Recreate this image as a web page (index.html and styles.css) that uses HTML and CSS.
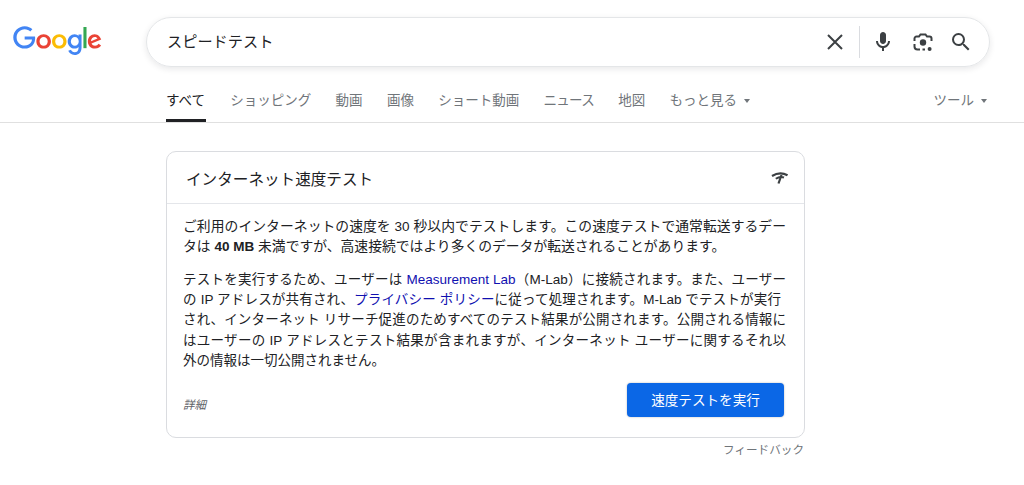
FILE: index.html
```html
<!DOCTYPE html>
<html lang="ja">
<head>
<meta charset="utf-8">
<title>スピードテスト</title>
<link rel="stylesheet" href="styles.css">
</head>
<body>
<header class="top">
  <svg class="logo" viewBox="0 0 272 92" role="img" aria-label="Google">
    <path fill="#EA4335" d="M115.75 47.18c0 12.77-9.99 22.18-22.25 22.18s-22.25-9.41-22.25-22.18C71.25 34.32 81.24 25 93.5 25s22.25 9.32 22.25 22.18zm-9.74 0c0-7.98-5.79-13.44-12.51-13.44S80.99 39.2 80.99 47.18c0 7.9 5.79 13.44 12.51 13.44s12.51-5.55 12.51-13.44z"/>
    <path fill="#FBBC05" d="M163.75 47.18c0 12.77-9.99 22.18-22.25 22.18s-22.25-9.41-22.25-22.18c0-12.85 9.99-22.18 22.25-22.18s22.25 9.32 22.25 22.18zm-9.74 0c0-7.98-5.79-13.44-12.51-13.44s-12.51 5.46-12.51 13.44c0 7.9 5.79 13.44 12.51 13.44s12.51-5.55 12.51-13.44z"/>
    <path fill="#4285F4" d="M209.75 26.34v39.82c0 16.38-9.66 23.07-21.08 23.07-10.75 0-17.22-7.19-19.66-13.07l8.48-3.53c1.51 3.61 5.21 7.87 11.17 7.87 7.31 0 11.84-4.51 11.84-13v-3.19h-.34c-2.18 2.69-6.38 5.04-11.68 5.04-11.09 0-21.25-9.66-21.25-22.09 0-12.52 10.16-22.26 21.25-22.26 5.29 0 9.49 2.35 11.68 4.96h.34v-3.61h9.25zm-8.56 20.92c0-7.81-5.21-13.52-11.84-13.52-6.72 0-12.35 5.71-12.35 13.52 0 7.73 5.63 13.36 12.35 13.36 6.63 0 11.84-5.63 11.84-13.36z"/>
    <path fill="#34A853" d="M225 3v65h-9.5V3h9.5z"/>
    <path fill="#EA4335" d="M262.02 54.48l7.56 5.04c-2.44 3.61-8.32 9.83-18.48 9.83-12.6 0-22.01-9.74-22.01-22.18 0-13.19 9.49-22.18 20.92-22.18 11.51 0 17.14 9.16 18.98 14.11l1.01 2.52-29.65 12.28c2.27 4.45 5.8 6.72 10.75 6.72 4.96 0 8.4-2.44 10.92-6.14zm-23.27-7.98l19.82-8.23c-1.09-2.77-4.37-4.7-8.23-4.7-4.95 0-11.84 4.37-11.59 12.93z"/>
    <path fill="#4285F4" d="M35.29 41.41V32H67c.31 1.64.47 3.58.47 5.68 0 7.06-1.93 15.79-8.15 22.01-6.05 6.3-13.78 9.66-24.02 9.66C16.32 69.35.36 53.89.36 34.91.36 15.93 16.32.47 35.3.47c10.5 0 17.98 4.12 23.6 9.49l-6.64 6.64c-4.03-3.78-9.49-6.72-16.97-6.72-13.86 0-24.7 11.17-24.7 25.03 0 13.86 10.84 25.03 24.7 25.03 8.99 0 14.11-3.61 17.39-6.89 2.66-2.66 4.41-6.46 5.1-11.65l-22.49.01z"/>
  </svg>
  <div class="search">
    <span class="query">スピードテスト</span>
    <svg class="ico-x" viewBox="0 0 24 24"><path d="M5 5l14 14M19 5L5 19" fill="none" stroke="#3c4043" stroke-width="2"/></svg>
    <span class="divider"></span>
    <svg class="ico-mic" viewBox="0 0 24 24"><path fill="#3c4043" d="M12 14c1.66 0 3-1.34 3-3V5c0-1.66-1.34-3-3-3S9 3.34 9 5v6c0 1.66 1.34 3 3 3z"/><path fill="#3c4043" d="M17 11c0 2.76-2.24 5-5 5s-5-2.24-5-5H5c0 3.53 2.61 6.43 6 6.92V21h2v-3.08c3.39-.49 6-3.39 6-6.92h-2z"/></svg>
    <svg class="ico-lens" viewBox="0 0 24 24"><circle cx="12" cy="12.5" r="3.2" fill="#3c4043"/><circle cx="18.6" cy="19" r="2" fill="#3c4043"/><path d="M3.5 11V8.5a2 2 0 0 1 2-2H8L9.5 4.5h5L16 6.5h2.5a2 2 0 0 1 2 2V11M3.5 14v2.5a3 3 0 0 0 3 3H9M11.5 19.5H14" fill="none" stroke="#3c4043" stroke-width="2"/></svg>
    <svg class="ico-search" viewBox="0 0 24 24"><path fill="#3c4043" d="M15.5 14h-.79l-.28-.27A6.47 6.47 0 0 0 16 9.5 6.5 6.5 0 1 0 9.5 16c1.61 0 3.09-.59 4.23-1.57l.27.28v.79l5 4.99L20.49 19l-4.99-5zm-6 0C7.01 14 5 11.99 5 9.5S7.01 5 9.5 5 14 7.01 14 9.500 11.99 14 9.500 14z"/></svg>
  </div>
</header>
<nav class="tabs">
  <a class="tab active">すべて</a>
  <a class="tab">ショッピング</a>
  <a class="tab">動画</a>
  <a class="tab">画像</a>
  <a class="tab">ショート動画</a>
  <a class="tab tight">ニュース</a>
  <a class="tab">地図</a>
  <a class="tab">もっと見る<i class="caret"></i></a>
  <a class="tab tools">ツール<i class="caret"></i></a>
</nav>
<main class="content">
  <section class="card">
    <div class="card-head">
      <h2 class="card-title">インターネット速度テスト</h2>
      <svg class="ico-speed" viewBox="0 0 17 12"><path d="M1 4Q9-.8 16.500 3.300" fill="none" stroke="#3c4043" stroke-width="2.200"/><path d="M4.800 6.800Q9 3.800 13 5.500" fill="none" stroke="#3c4043" stroke-width="2"/><path d="M10.500 3L7.500 11.500" fill="none" stroke="#3c4043" stroke-width="2.200"/></svg>
    </div>
    <div class="card-body">
      <p class="para para-lead">
        <span class="line full">ご利用のインターネットの速度を <span class="latin">30</span> 秒以内でテストします。この速度テストで通常転送するデー</span>
        <span class="line">タは <b class="latin">40 MB</b> 未満ですが、高速接続ではより多くのデータが転送されることがあります。</span>
      </p>
      <p class="para para-main">
        <span class="line full">テストを実行するため、ユーザーは <a class="link latin">Measurement Lab</a>（<span class="latin">M-Lab</span>）に接続されます。また、ユーザー</span>
        <span class="line full short">の <span class="latin">IP</span> アドレスが共有され、<a class="link">プライバシー ポリシー</a>に従って処理されます。<span class="latin">M-Lab</span> でテストが実行</span>
        <span class="line full">され、インターネット リサーチ促進のためすべてのテスト結果が公開されます。公開される情報に</span>
        <span class="line full">はユーザーの <span class="latin">IP</span> アドレスとテスト結果が含まれますが、インターネット ユーザーに関するそれ以</span>
        <span class="line">外の情報は一切公開されません。</span>
      </p>
      <div class="card-foot">
        <em class="more">詳細</em>
        <button class="run">速度テストを実行</button>
      </div>
    </div>
  </section>
  <div class="feedback">フィードバック</div>
</main>
</body>
</html>
```

FILE: styles.css
```css
* { box-sizing: border-box; }
html, body { margin: 0; padding: 0; }
body {
  width: 1024px; height: 485px; overflow: hidden; background: #fff; color: #202124;
  font-family: "Liberation Sans", "Noto Sans CJK JP", sans-serif;
}
.top { display: flex; align-items: flex-start; height: 83px; padding: 17px 0 0 13px; }
.logo { width: 89px; height: 30px; margin: 9px 44px 0 0; flex: none; }
.search {
  display: flex; align-items: center; width: 844px; height: 50px; padding: 0 16px 0 20px;
  border: 1px solid #e4e6e8; border-radius: 25px; box-shadow: 0 2px 6px rgba(32,33,36,.1);
}
.query { flex: 1; font-size: 15.2px; color: #202124; padding-bottom: 4px; }
.ico-x { width: 24px; height: 24px; }
.divider { width: 1px; height: 32px; background: #dadce0; margin: 0 11px 0 12px; }
.ico-mic { width: 24px; height: 24px; margin-right: 16px; }
.ico-lens { width: 24px; height: 24px; margin-right: 14px; }
.ico-search { width: 24px; height: 24px; }
.tabs {
  display: flex; gap: 24.3px; height: 40px; padding-left: 166px; border-bottom: 1px solid #e0e0e0; font-size: 13.5px;
}
.tab { color: #70757a; line-height: 36px; height: 39px; white-space: nowrap; }
.tab.active { color: #202124; border-bottom: 3px solid #202124; width: 40px; }
.tight { letter-spacing: -.7px; }
.tools { margin-left: auto; margin-right: 37px; }
.caret {
  display: inline-block; margin-left: 7px; vertical-align: middle;
  border-left: 3.5px solid transparent; border-right: 3.5px solid transparent; border-top: 4px solid #70757a;
}
.content { width: 639px; margin: 28px 0 0 166px; }
.card { border: 1px solid #dadce0; border-radius: 10px; height: 287px; }
.card-head {
  display: flex; align-items: center; justify-content: space-between; height: 52px; padding: 0 16px 0 19px;
  border-bottom: 1px solid #e4e6ea;
}
.card-title { margin: 0; font-size: 15.6px; font-weight: 400; color: #202124; }
.ico-speed { width: 17px; height: 12px; }
.card-body { padding: 13px 18px 0 16px; }
.para { margin: 0 0 12.5px; line-height: 20.2px; color: #202124; }
.para-lead { font-size: 13.8px; }
.para-main { font-size: 13.5px; }
.line { display: block; white-space: nowrap; }
.full { text-align: justify; text-align-last: justify; text-justify: inter-character; }
.short { margin-right: 5px; }
.latin { font-size: 13.5px; }
.link { color: #1010b0; }
.card-foot { display: flex; align-items: flex-start; justify-content: space-between; margin-top: 12px; padding-right: 2px; }
.more { font-size: 11.5px; color: #5f6368; margin-top: 13px; }
.run {
  width: 157px; height: 34px; border: 0; border-radius: 4px; background: #0b67e6; color: #fff;
  font: inherit; font-size: 13.6px; padding: 0 0 3px; box-shadow: 0 0 2px rgba(0,0,0,.3);
}
.feedback { text-align: right; font-size: 11.6px; color: #70757a; margin-top: 3px; padding-right: 1px; }
```
